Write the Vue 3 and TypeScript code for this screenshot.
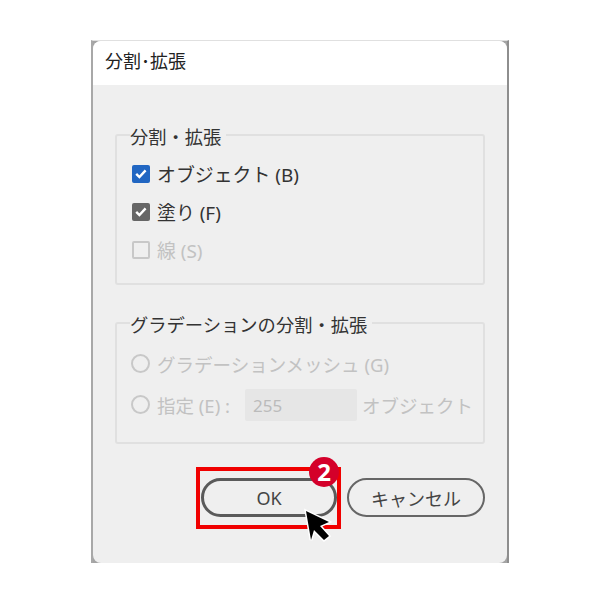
<script setup lang="ts">
const options = [
  { label: 'オブジェクト (B)', state: 'blue' },
  { label: '塗り (F)', state: 'gray' },
  { label: '線 (S)', state: 'off' },
]
</script>

<template>
  <div class="page">
    <div class="frame">
      <div class="dialog">
        <div class="title">分割･拡張</div>
        <div class="body">
          <fieldset class="group first">
            <legend>分割・拡張</legend>
            <div v-for="o in options" :key="o.label" class="row" :class="{ dim: o.state === 'off' }">
              <span class="check" :class="o.state">
                <svg v-if="o.state !== 'off'" class="tick" width="18" height="18" viewBox="0 0 18 18">
                  <path d="M4.2 8.8l3.2 3.2 6.2-6.6" fill="none" stroke="#fff" stroke-width="2.4" />
                </svg>
              </span>
              <span>{{ o.label }}</span>
            </div>
          </fieldset>

          <fieldset class="group second">
            <legend>グラデーションの分割・拡張</legend>
            <div class="row dim">
              <span class="radio"></span>
              <span>グラデーションメッシュ (G)</span>
            </div>
            <div class="row dim">
              <span class="radio"></span>
              <span class="spec">指定 (E) :</span>
              <span class="field">255</span>
              <span>オブジェクト</span>
            </div>
          </fieldset>

          <div class="buttons">
            <div class="ok-wrap">
              <button class="btn ok">OK</button>
              <span class="badge">2</span>
              <svg class="cursor" width="32" height="38" viewBox="0 0 32 38">
                <path
                  d="M5 5L28 16 19 20 28 30 23 34 13 24 10 34Z"
                  fill="#000"
                  stroke="#fff"
                  stroke-width="3"
                  paint-order="stroke"
                />
              </svg>
            </div>
            <button class="btn cancel">キャンセル</button>
          </div>
        </div>
      </div>
    </div>
  </div>
</template>

<style>
html,
body {
  margin: 0;
  background: #fff;
}
</style>

<style scoped>
.page {
  width: 600px;
  height: 601px;
  padding: 40px 0 0 91px;
  box-sizing: border-box;
  font-family: 'Noto Sans', 'Noto Sans CJK JP', sans-serif;
}

/* square grey edge, only visible down the sides and in the corners */
.frame {
  width: 418px;
  height: 523px;
  box-sizing: border-box;
  background: #a4a4a4;
  border-top: 1px solid #e0e0e0;
  border-left: 2px solid #a8a8a8;
  border-right: 2px solid #8e8e8e;
}

.dialog {
  height: 100%;
  border-radius: 8px;
  background: #efefef;
  overflow: hidden;
  display: flex;
  flex-direction: column;
}

.title {
  height: 44px;
  flex: none;
  background: #fff;
  padding-left: 12px;
  font-size: 18px;
  line-height: 41px;
  color: #222;
}

.body {
  padding: 0 22px;
  display: flex;
  flex-direction: column;
}

.group {
  margin: 0;
  padding: 0 0 0 15px;
  border: 2px solid #e0e0e0;
  border-radius: 3px;
  min-width: 0;
}

.group legend {
  margin-left: -2px;
  padding: 4px 5px 0 0;
  font-size: 18.3px;
  line-height: 24px;
  color: #333;
}

.first {
  margin-top: 36px;
  height: 164px;
  box-sizing: border-box;
}

.second {
  margin-top: 24px;
  height: 135px;
  box-sizing: border-box;
  padding-top: 6px;
}

.row {
  display: flex;
  align-items: center;
  gap: 8px;
  height: 38px;
  font-size: 18.5px;
  color: #333;
  white-space: nowrap;
}

.first .row {
  gap: 7px;
  font-size: 18.9px;
}

.first .row:first-of-type {
  margin-top: 6px;
}

.row.dim {
  color: #c2c2c2;
}

.check {
  width: 18px;
  height: 18px;
  box-sizing: border-box;
  border-radius: 2px;
  display: block;
  flex: none;
}

.tick {
  display: block;
}

.check.blue {
  background: #2166c2;
}

.check.gray {
  background: #666;
}

.check.off {
  border: 2px solid #c8c8c8;
}

.radio {
  width: 19px;
  height: 19px;
  box-sizing: border-box;
  border: 2px solid #c8c8c8;
  border-radius: 50%;
  flex: none;
  margin-left: -1px;
}

.second .row {
  gap: 7px;
  height: 41px;
}

.spec {
  width: 81px;
  flex: none;
}

.field {
  width: 112px;
  height: 32px;
  box-sizing: border-box;
  padding-left: 8px;
  margin-right: -2px;
  background: #e6e6e6;
  border-radius: 2px;
  line-height: 34px;
  color: #bbb;
  font-size: 17px;
}

.buttons {
  margin-top: 34px;
  margin-left: 86px;
  display: flex;
  gap: 10px;
}

.ok-wrap {
  position: relative;
}

.ok-wrap::before {
  content: '';
  position: absolute;
  left: -5px;
  top: -11px;
  width: 145px;
  height: 62px;
  box-sizing: border-box;
  border: 4px solid #f00000;
}

.btn {
  display: block;
  height: 39px;
  border-radius: 20px;
  background: #efefef;
  font-family: inherit;
  font-size: 18px;
  color: #444;
  padding: 0;
  box-sizing: border-box;
}

.ok {
  position: relative;
  width: 136px;
  border: 3px solid #5a5a5a;
}

.cancel {
  width: 139px;
  border: 2px solid #666;
}

.badge {
  position: absolute;
  left: 108px;
  top: -21px;
  width: 30px;
  height: 30px;
  border-radius: 50%;
  background: #d4002a;
  color: #fff;
  font-size: 24px;
  font-weight: 700;
  line-height: 30px;
  text-align: center;
}

.cursor {
  position: absolute;
  left: 100px;
  top: 28px;
}
</style>
